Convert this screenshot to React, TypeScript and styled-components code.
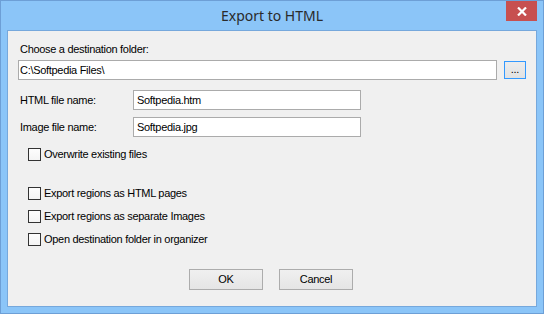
import React from "react";
import styled, { createGlobalStyle } from "styled-components";

const Global = createGlobalStyle`
  html, body { margin: 0; padding: 0; background: #8bc5f8; }
  body { width: 544px; height: 314px; overflow: hidden; }
  * { box-sizing: border-box; }
`;

const Window = styled.div`
  width: 544px;
  height: 314px;
  background: #8bc5f8;
  border: 1px solid #6d9fd6;
  display: flex;
  flex-direction: column;
`;

const TitleBar = styled.div`
  height: 29px;
  display: grid;
  grid-template-columns: 1fr auto 1fr;
  align-items: start;
`;

const Title = styled.div`
  grid-column: 2;
  font-family: "Noto Sans", "Open Sans", sans-serif;
  font-size: 14px;
  color: #2a2a2a;
  line-height: 20px;
  padding-top: 5px;
`;

const CloseButton = styled.div`
  grid-column: 3;
  justify-self: end;
  width: 31px;
  height: 20px;
  margin-right: 6px;
  background: #c75050;
  display: flex;
  align-items: center;
  justify-content: center;
`;

const Client = styled.div`
  flex: 1;
  margin: 0 6px 6px 6px;
  background: #f0f0f0;
  border: 1px solid #76a8dc;
  display: flex;
  flex-direction: column;
  padding: 12px 10px 0 10px;
  font-family: "Liberation Sans", Arial, sans-serif;
  font-size: 11px;
  letter-spacing: -0.3px;
  color: #000;
`;

const Label = styled.div`
  line-height: 13px;
  padding-left: 2px;
  white-space: nowrap;
`;

const PathRow = styled.div`
  display: flex;
  align-items: flex-start;
  gap: 7px;
  margin-top: 4px;
`;

const TextBox = styled.div<{ $width?: number; $pad?: number }>`
  ${(p) => (p.$width ? `width: ${p.$width}px;` : "flex: 1;")}
  height: 20px;
  background: #fff;
  border: 1px solid #ababab;
  line-height: 18px;
  padding-left: ${(p) => p.$pad ?? 3}px;
  white-space: nowrap;
`;

const BrowseButton = styled.div`
  width: 22px;
  height: 18px;
  margin-top: 1px;
  border: 1px solid #3399ff;
  background: linear-gradient(#ececec, #e2e2e2);
  display: flex;
  justify-content: center;
  align-items: flex-end;
  line-height: 13px;
  padding-bottom: 2px;
  flex-shrink: 0;
`;

const FieldRow = styled.div<{ $top: number }>`
  display: flex;
  align-items: center;
  margin-top: ${(p) => p.$top}px;
`;

const FieldLabel = styled(Label)`
  width: 115px;
`;

const CheckRow = styled.div<{ $top: number }>`
  display: flex;
  align-items: center;
  gap: 3px;
  margin-top: ${(p) => p.$top}px;
  padding-left: 10px;
  height: 13px;
`;

const CheckBox = styled.div`
  width: 13px;
  height: 13px;
  border: 1px solid #333;
  background: linear-gradient(#fdfdfd, #f4f4f4);
  flex-shrink: 0;
`;

const CheckLabel = styled.span`
  line-height: 13px;
  white-space: nowrap;
`;

const ButtonRow = styled.div`
  display: flex;
  justify-content: center;
  gap: 16px;
  margin-top: 23px;
  padding-right: 2px;
`;

const PushButton = styled.div`
  width: 74px;
  height: 21px;
  border: 1px solid #acacac;
  background: linear-gradient(#f0f0f0, #e5e5e5);
  display: flex;
  align-items: center;
  justify-content: center;
  line-height: 13px;
`;

const checks = [
  { top: 11, text: "Overwrite existing files" },
  { top: 26, text: "Export regions as HTML pages" },
  { top: 10, text: "Export regions as separate Images" },
  { top: 10, text: "Open destination folder in organizer" },
];

export default function App() {
  return (
    <>
      <Global />
      <Window>
        <TitleBar>
          <Title>Export to HTML</Title>
          <CloseButton>
            <svg width="10" height="9" viewBox="0 0 10 9">
              <path d="M1 0.5 L9 8.5 M9 0.5 L1 8.5" stroke="#fff" strokeWidth="2.2" />
            </svg>
          </CloseButton>
        </TitleBar>
        <Client>
          <Label>Choose a destination folder:</Label>
          <PathRow>
            <TextBox $pad={1}>C:\Softpedia Files\</TextBox>
            <BrowseButton>...</BrowseButton>
          </PathRow>
          <FieldRow $top={10}>
            <FieldLabel>HTML file name:</FieldLabel>
            <TextBox $width={228}>Softpedia.htm</TextBox>
          </FieldRow>
          <FieldRow $top={7}>
            <FieldLabel>Image file name:</FieldLabel>
            <TextBox $width={228}>Softpedia.jpg</TextBox>
          </FieldRow>
          {checks.map((c) => (
            <CheckRow key={c.text} $top={c.top}>
              <CheckBox />
              <CheckLabel>{c.text}</CheckLabel>
            </CheckRow>
          ))}
          <ButtonRow>
            <PushButton>OK</PushButton>
            <PushButton>Cancel</PushButton>
          </ButtonRow>
        </Client>
      </Window>
    </>
  );
}
